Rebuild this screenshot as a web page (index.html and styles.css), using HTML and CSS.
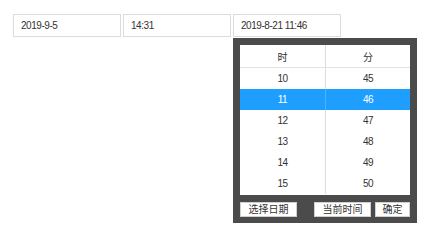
FILE: index.html
```html
<!DOCTYPE html>
<html lang="zh-CN">
<head>
<meta charset="utf-8">
<title>日期时间选择</title>
<link rel="stylesheet" href="styles.css">
</head>
<body>
<div class="page">
<div class="fields">
  <div class="field"><span class="num">2019-9-5</span></div>
  <div class="field"><span class="num">14:31</span></div>
  <div class="field host"><span class="num">2019-8-21 11:46</span>
    <div class="picker">
      <div class="list">
        <div class="row head"><div class="cell">时</div><div class="cell right">分</div></div>
        <div class="row"><div class="cell num">10</div><div class="cell right num">45</div></div>
        <div class="row active"><div class="cell num">11</div><div class="cell right num">46</div></div>
        <div class="row"><div class="cell num">12</div><div class="cell right num">47</div></div>
        <div class="row"><div class="cell num">13</div><div class="cell right num">48</div></div>
        <div class="row"><div class="cell num">14</div><div class="cell right num">49</div></div>
        <div class="row"><div class="cell num">15</div><div class="cell right num">50</div></div>
      </div>
      <div class="actions">
        <button class="btn wide">选择日期</button>
        <span class="spacer"></span>
        <button class="btn wide">当前时间</button>
        <button class="btn small">确定</button>
      </div>
    </div>
  </div>
</div>
</div>
</body>
</html>
```
FILE: styles.css
```css
html, body {
  margin: 0;
  padding: 0;
  background: #ffffff;
}
body {
  font-family: "Liberation Sans", "Noto Sans CJK SC", sans-serif;
  font-size: 10px;
  color: #333333;
}
.page {
  min-height: 240px;
}
.fields {
  display: flex;
  gap: 2px;
  padding: 14px 13px;
}
.field {
  box-sizing: border-box;
  width: 108px;
  height: 23px;
  border: 1px solid #dcdcdc;
  padding: 0 7px;
  line-height: 21px;
  background: #fff;
}
.num {
  letter-spacing: -0.45px;
}
.host {
  position: relative;
}
.picker {
  position: absolute;
  left: -1px;
  top: calc(100% + 2px);
  box-sizing: border-box;
  width: 184px;
  height: 185px;
  background: #4b4b4b;
  padding: 7px 7px 6px 7px;
  display: flex;
  flex-direction: column;
  gap: 7px;
  line-height: normal;
}
.list {
  background: #ffffff;
  width: 170px;
  height: 150px;
  overflow: hidden;
}
.row {
  display: grid;
  grid-template-columns: 85px 85px;
  height: 21px;
}
.row.head {
  height: 22px;
  border-bottom: 1px solid #e2e2e2;
}
.cell {
  display: flex;
  align-items: center;
  justify-content: center;
  color: #333333;
  font-size: 10px;
}
.cell.right {
  border-left: 1px solid #dedede;
}
.row.active {
  background: #1e9fff;
}
.row.active .cell {
  color: #ffffff;
}
.row.active .cell.right {
  border-left-color: #4cb2ff;
}
.actions {
  display: flex;
  align-items: center;
  height: 15px;
}
.spacer {
  flex: 1;
}
.btn {
  box-sizing: border-box;
  height: 15px;
  margin: 0;
  padding: 0;
  border: 1px solid #d0d0d0;
  background: #ffffff;
  color: #333333;
  font-family: "Liberation Sans", "Noto Sans CJK SC", sans-serif;
  font-size: 10px;
  line-height: 13px;
  text-align: center;
}
.btn.wide {
  width: 57px;
}
.btn.small {
  width: 35px;
  margin-left: 4px;
}
```
